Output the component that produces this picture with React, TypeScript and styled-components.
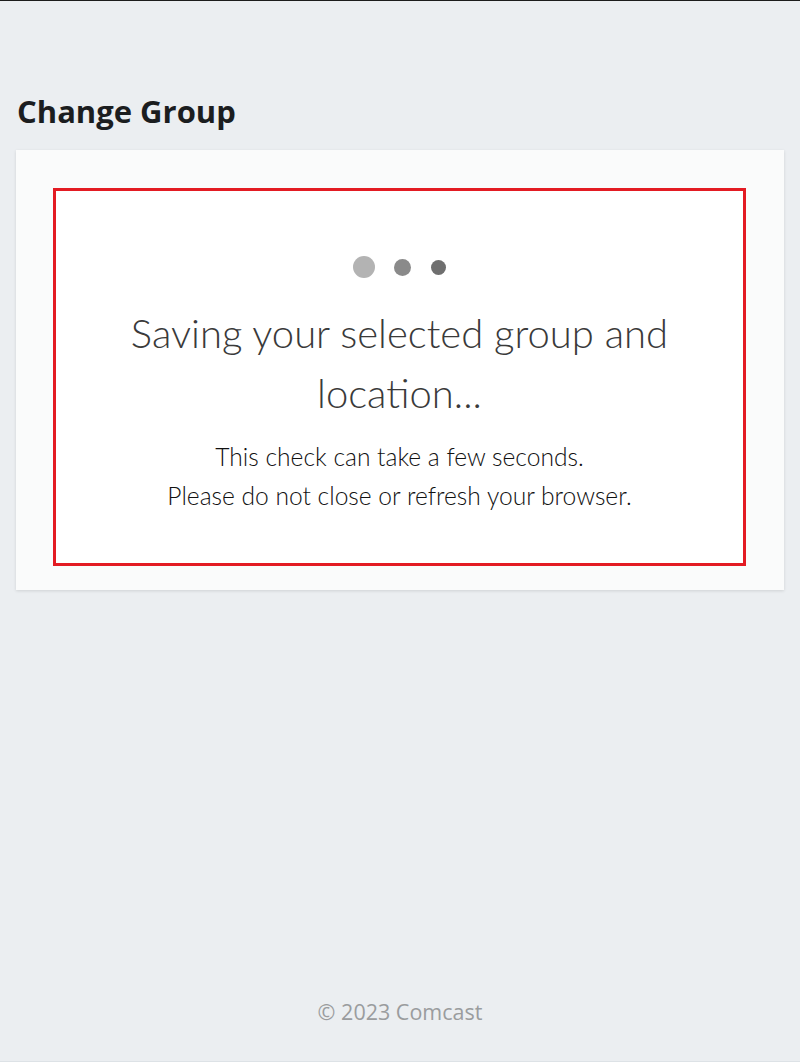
import React from "react";
import styled, { createGlobalStyle } from "styled-components";

const GlobalStyle = createGlobalStyle`
  html, body {
    margin: 0;
    padding: 0;
    background: #ebeef1;
  }
  * { box-sizing: border-box; }
`;

const Page = styled.div`
  min-height: 1062px;
  display: flex;
  flex-direction: column;
  background: #ebeef1;
  border-top: 1px solid #1c1c1c;
  border-bottom: 1px solid #dde2e6;
`;

const Main = styled.main`
  flex: 1;
  padding: 0 16px;
`;

const Heading = styled.h1`
  margin: 89px 0 17px 1px;
  font-family: "Open Sans", "Noto Sans", sans-serif;
  font-weight: 700;
  font-size: 31px;
  line-height: 43px;
  color: #1b1d1f;
`;

const Card = styled.section`
  background: #fafbfb;
  box-shadow: 0 1px 3px rgba(0, 0, 0, 0.12);
  padding: 38px 38px 24px 37px;
`;

const Notice = styled.div`
  border: 3px solid #e31b23;
  background: #ffffff;
  height: 378px;
  display: flex;
  flex-direction: column;
  align-items: center;
  padding-top: 64px;
`;

const Dots = styled.div`
  display: flex;
  align-items: center;
  height: 24px;
`;

const Dot = styled.span<{ $size: number; $color: string; $gap: number }>`
  width: ${(p) => p.$size}px;
  height: ${(p) => p.$size}px;
  border-radius: 50%;
  background: ${(p) => p.$color};
  margin-left: ${(p) => p.$gap}px;
`;

const Title = styled.h2`
  margin: 24px 0 0;
  font-family: Lato, "Open Sans", sans-serif;
  font-weight: 300;
  font-size: 40px;
  line-height: 60px;
  color: #3a3a3a;
  text-align: center;
  max-width: 580px;
`;

const Message = styled.p`
  margin: 14px 0 0;
  font-family: Lato, "Open Sans", sans-serif;
  font-weight: 300;
  font-size: 24.6px;
  line-height: 39px;
  color: #111111;
  text-align: center;
`;

const Footer = styled.footer`
  text-align: center;
  font-family: "Open Sans", "Noto Sans", sans-serif;
  font-size: 21.5px;
  line-height: 28px;
  color: #9a9c9e;
  padding-bottom: 35px;
`;

export default function App() {
  return (
    <>
      <GlobalStyle />
      <Page>
        <Main>
          <Heading>Change Group</Heading>
          <Card>
            <Notice>
              <Dots>
                <Dot $size={22} $color="#b3b3b3" $gap={0} />
                <Dot $size={17} $color="#8a8a8a" $gap={19} />
                <Dot $size={15} $color="#6f6f6f" $gap={20} />
              </Dots>
              <Title>Saving your selected group and location...</Title>
              <Message>
                This check can take a few seconds.
                <br />
                Please do not close or refresh your browser.
              </Message>
            </Notice>
          </Card>
        </Main>
        <Footer>© 2023 Comcast</Footer>
      </Page>
    </>
  );
}
